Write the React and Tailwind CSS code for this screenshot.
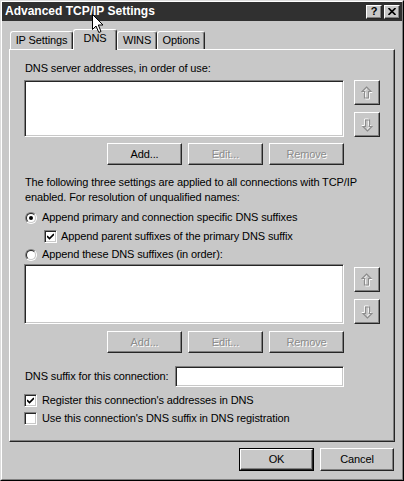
import React from "react";

const ui = "font-['Liberation_Sans',Arial,sans-serif] text-[11px] tracking-[-0.12px] leading-[15px]";

// classic 3D bevels
const raised = "border border-t-white border-l-white border-r-[#262626] border-b-[#262626] shadow-[inset_-1px_-1px_0_#808080] bg-[#c8c8c8]";
const sunken = "border border-t-[#808080] border-l-[#808080] border-r-white border-b-white shadow-[inset_1px_1px_0_#262626,inset_-1px_-1px_0_#c8c8c8] bg-white";

function PushButton({ children, disabled, isDefault, className = "" }) {
    const label = (
        <span className={disabled ? "text-[#8c8c8c] [text-shadow:1px_1px_0_#fff]" : "text-black"}>{children}</span>
    );
    if (isDefault) {
        return (
            <div className={`border border-black ${className}`}>
                <div className={`flex h-full w-full items-center justify-center ${raised}`}>{label}</div>
            </div>
        );
    }
    return <div className={`flex items-center justify-center ${raised} ${className}`}>{label}</div>;
}

function Arrow({ down }) {
    const pts = "5,0.5 9.5,5 7,5 7,11.5 3,11.5 3,5 0.5,5";
    return (
        <svg width="12" height="14" viewBox="0 0 12 14" className={down ? "rotate-180" : ""}>
            <polygon points={pts} transform="translate(1.5 1.5)" fill="none" stroke="#ffffff" strokeWidth="1" />
            <polygon points={pts} transform="translate(0.5 0.5)" fill="none" stroke="#8c8c8c" strokeWidth="1.2" />
        </svg>
    );
}

function MoveButtons() {
    return (
        <div className="ml-[10px] flex w-[26px] flex-col justify-end gap-[7px]">
            <div className={`flex h-[25px] items-center justify-center ${raised}`}><Arrow /></div>
            <div className={`flex h-[25px] items-center justify-center ${raised}`}><Arrow down /></div>
        </div>
    );
}

function Radio({ checked }) {
    return (
        <div className="h-[12px] w-[12px] shrink-0 rounded-full border border-t-[#808080] border-l-[#808080] border-r-white border-b-white">
            <div className="flex h-full w-full items-center justify-center rounded-full border border-t-[#262626] border-l-[#262626] border-r-[#c8c8c8] border-b-[#c8c8c8] bg-white">
                {checked && <div className="h-[4px] w-[4px] rounded-full bg-black" />}
            </div>
        </div>
    );
}

function Check({ checked }) {
    return (
        <div className={`flex h-[13px] w-[13px] shrink-0 items-center justify-center ${sunken}`}>
            {checked && (
                <svg width="7" height="7" viewBox="0 0 7 7">
                    <path d="M0 3 L2.5 5.5 L7 1" fill="none" stroke="black" strokeWidth="1.6" />
                </svg>
            )}
        </div>
    );
}

function Tab({ label, active, className }) {
    return (
        <div
            className={`relative flex justify-center rounded-t-[3px] border-t border-l border-r border-t-white border-l-white border-r-[#262626] bg-[#c8c8c8] shadow-[inset_-1px_0_0_#808080] ${
                active ? "z-10 -mb-px h-[21px] pt-[1px]" : "h-[18px] pt-[1px]"
            } ${className}`}
        >
            {label}
        </div>
    );
}

export default function App() {
    return (
        <div className={`relative h-[481px] w-[404px] overflow-hidden border border-t-[#dcdcdc] border-l-[#dcdcdc] border-r-black border-b-black bg-[#c8c8c8] ${ui}`}>
            <div className="h-full w-full border border-t-white border-l-white border-r-[#808080] border-b-[#808080]">
                {/* caption */}
                <div className="flex h-[19px] items-center justify-between bg-[#303030] pl-[3px] pr-[2px]">
                    <span className="text-[12px] font-bold tracking-normal text-white">Advanced TCP/IP Settings</span>
                    <div className="flex gap-[2px]">
                        <div className={`flex h-[14px] w-[16px] items-center justify-center ${raised}`}>
                            <span className="text-[11px] font-bold leading-none text-black">?</span>
                        </div>
                        <div className={`flex h-[14px] w-[16px] items-center justify-center ${raised}`}>
                            <svg width="8" height="7" viewBox="0 0 8 7">
                                <path d="M0.5 0 L7.5 7 M7.5 0 L0.5 7" stroke="black" strokeWidth="1.6" />
                            </svg>
                        </div>
                    </div>
                </div>

                <div className="px-[7px] pt-[8px]">
                    {/* tab strip */}
                    <div className="flex h-[20px] items-end pl-[1px]">
                        <Tab label="IP Settings" className="w-[63px]" />
                        <Tab label="DNS" active className="w-[44px]" />
                        <Tab label="WINS" className="w-[40px]" />
                        <Tab label="Options" className="w-[48px]" />
                    </div>

                    <div className="box-border h-[393px] border border-t-white border-l-white border-r-[#262626] border-b-[#262626] pl-[14px] pt-[11px] shadow-[inset_-1px_-1px_0_#808080]">
                        <div className="h-[15px] pl-[1px]">DNS server addresses, in order of use:</div>
                        <div className="mt-[4px] flex">
                            <div className={`h-[57px] w-[320px] ${sunken}`} />
                            <MoveButtons />
                        </div>
                        <div className="mt-[6px] flex w-[320px] justify-end gap-[6px]">
                            <PushButton className="h-[22px] w-[75px]">Add...</PushButton>
                            <PushButton disabled className="h-[22px] w-[75px]">Edit...</PushButton>
                            <PushButton disabled className="h-[22px] w-[75px]">Remove</PushButton>
                        </div>

                        <p className="mt-[10px] whitespace-nowrap pl-[1px]">
                            The following three settings are applied to all connections with TCP/IP
                            <br />
                            enabled. For resolution of unqualified names:
                        </p>

                        <div className="mt-[3px] flex h-[19px] items-center gap-[5px] pl-[1px]">
                            <Radio checked />
                            <span>Append primary and connection specific DNS suffixes</span>
                        </div>
                        <div className="flex h-[19px] items-center gap-[4px] pl-[20px]">
                            <Check checked />
                            <span>Append parent suffixes of the primary DNS suffix</span>
                        </div>
                        <div className="flex h-[17px] items-center gap-[5px] pl-[1px]">
                            <Radio />
                            <span>Append these DNS suffixes (in order):</span>
                        </div>

                        <div className="mt-[1px] flex">
                            <div className={`h-[60px] w-[320px] ${sunken}`} />
                            <MoveButtons />
                        </div>
                        <div className="mt-[7px] flex w-[320px] justify-end gap-[6px]">
                            <PushButton disabled className="h-[22px] w-[75px]">Add...</PushButton>
                            <PushButton disabled className="h-[22px] w-[75px]">Edit...</PushButton>
                            <PushButton disabled className="h-[22px] w-[75px]">Remove</PushButton>
                        </div>

                        <div className="mt-[13px] flex w-[320px] items-center justify-between pl-[1px]">
                            <span className="whitespace-nowrap">DNS suffix for this connection:</span>
                            <div className={`h-[21px] w-[169px] shrink-0 ${sunken}`} />
                        </div>

                        <div className="mt-[4px] flex h-[18px] items-center gap-[5px]">
                            <Check checked />
                            <span>Register this connection's addresses in DNS</span>
                        </div>
                        <div className="flex h-[18px] items-center gap-[5px]">
                            <Check />
                            <span>Use this connection's DNS suffix in DNS registration</span>
                        </div>
                    </div>

                    <div className="mt-[6px] flex justify-end gap-[6px] pr-[1px]">
                        <PushButton isDefault className="h-[23px] w-[75px]">OK</PushButton>
                        <PushButton className="h-[23px] w-[74px]">Cancel</PushButton>
                    </div>
                </div>
            </div>

            {/* mouse pointer over the caption */}
            <svg width="13" height="20" viewBox="0 0 13 20" className="absolute left-[91px] top-[13px] z-50">
                <path d="M0.5 0.5 V15.5 L4 12 L6.8 18.5 L9 17.5 L6.3 11 H11 Z" fill="white" stroke="black" strokeWidth="1" strokeLinejoin="miter" />
            </svg>
        </div>
    );
}
